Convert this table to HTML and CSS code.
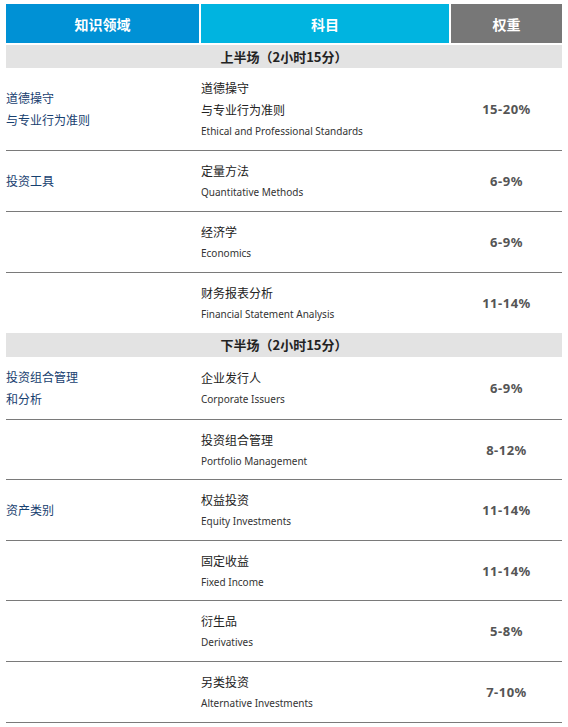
FILE: index.html
```html
<!DOCTYPE html>
<html lang="zh-CN">
<head>
<meta charset="utf-8">
<title>CFA 考试科目权重</title>
<link rel="stylesheet" href="styles.css">
</head>
<body>
<div class="sheet">
  <div class="head">
    <div class="hcell h1">知识领域</div>
    <div class="hcell h2">科目</div>
    <div class="hcell h3">权重</div>
  </div>
  <div class="section first">上半场（2小时15分）</div>
  <div class="row">
    <div class="area">道德操守<br>与专业行为准则</div>
    <div class="subj"><div class="cn">道德操守<br>与专业行为准则</div><div class="en">Ethical and Professional Standards</div></div>
    <div class="wt">15-20%</div>
  </div>
  <div class="row">
    <div class="area">投资工具</div>
    <div class="subj"><div class="cn">定量方法</div><div class="en">Quantitative Methods</div></div>
    <div class="wt">6-9%</div>
  </div>
  <div class="row">
    <div class="area"></div>
    <div class="subj"><div class="cn">经济学</div><div class="en">Economics</div></div>
    <div class="wt">6-9%</div>
  </div>
  <div class="row last">
    <div class="area"></div>
    <div class="subj"><div class="cn">财务报表分析</div><div class="en">Financial Statement Analysis</div></div>
    <div class="wt">11-14%</div>
  </div>
  <div class="section second">下半场（2小时15分）</div>
  <div class="row tight">
    <div class="area">投资组合管理<br>和分析</div>
    <div class="subj"><div class="cn">企业发行人</div><div class="en">Corporate Issuers</div></div>
    <div class="wt">6-9%</div>
  </div>
  <div class="row tight">
    <div class="area"></div>
    <div class="subj"><div class="cn">投资组合管理</div><div class="en">Portfolio Management</div></div>
    <div class="wt">8-12%</div>
  </div>
  <div class="row tight">
    <div class="area">资产类别</div>
    <div class="subj"><div class="cn">权益投资</div><div class="en">Equity Investments</div></div>
    <div class="wt">11-14%</div>
  </div>
  <div class="row tight">
    <div class="area"></div>
    <div class="subj"><div class="cn">固定收益</div><div class="en">Fixed Income</div></div>
    <div class="wt">11-14%</div>
  </div>
  <div class="row tight">
    <div class="area"></div>
    <div class="subj"><div class="cn">衍生品</div><div class="en">Derivatives</div></div>
    <div class="wt">5-8%</div>
  </div>
  <div class="row tight">
    <div class="area"></div>
    <div class="subj"><div class="cn">另类投资</div><div class="en">Alternative Investments</div></div>
    <div class="wt">7-10%</div>
  </div>
</div>
</body>
</html>
```
FILE: styles.css
```css
html, body {
  margin: 0;
  padding: 0;
  background: #ffffff;
}
body {
  font-family: "Noto Sans", "Noto Sans CJK SC", sans-serif;
  color: #222222;
}
.sheet {
  width: 556px;
  padding: 4px 6px 0 6px;
}
.head {
  display: grid;
  grid-template-columns: 193px 248px 111px;
  column-gap: 2px;
  height: 39px;
}
.hcell {
  display: flex;
  align-items: center;
  justify-content: center;
  color: #ffffff;
  font-family: "Noto Sans CJK SC", sans-serif;
  font-weight: 700;
  font-size: 14px;
}
.h1 { background: #0091d5; }
.h2 { background: #00b4e0; }
.h3 { background: #777777; }
.section {
  background: #e3e3e3;
  text-align: center;
  font-family: "Noto Sans CJK SC", sans-serif;
  font-weight: 700;
  font-size: 13px;
  color: #222222;
}
.section.first {
  margin-top: 2px;
  height: 23px;
  line-height: 23px;
}
.section.second {
  height: 24px;
  line-height: 24px;
}
.row {
  display: grid;
  grid-template-columns: 195px 250px 111px;
  align-items: center;
  padding: 9px 0 9px 0;
  border-bottom: 1px solid #7a7a7a;
}
.row.tight {
  padding: 9px 0 8.6px 0;
}
.row.last {
  border-bottom: none;
}
.area {
  font-family: "Noto Sans CJK SC", sans-serif;
  font-size: 12px;
  line-height: 22px;
  color: #17406f;
}
.cn {
  font-family: "Noto Sans CJK SC", sans-serif;
  font-size: 12px;
  line-height: 22px;
  color: #222222;
}
.en {
  font-family: "Noto Sans", sans-serif;
  font-size: 10px;
  line-height: 20px;
  color: #333333;
}
.wt {
  text-align: center;
  font-family: "Noto Sans", sans-serif;
  font-weight: 700;
  font-size: 13px;
  letter-spacing: 0.5px;
  color: #555555;
}
```
